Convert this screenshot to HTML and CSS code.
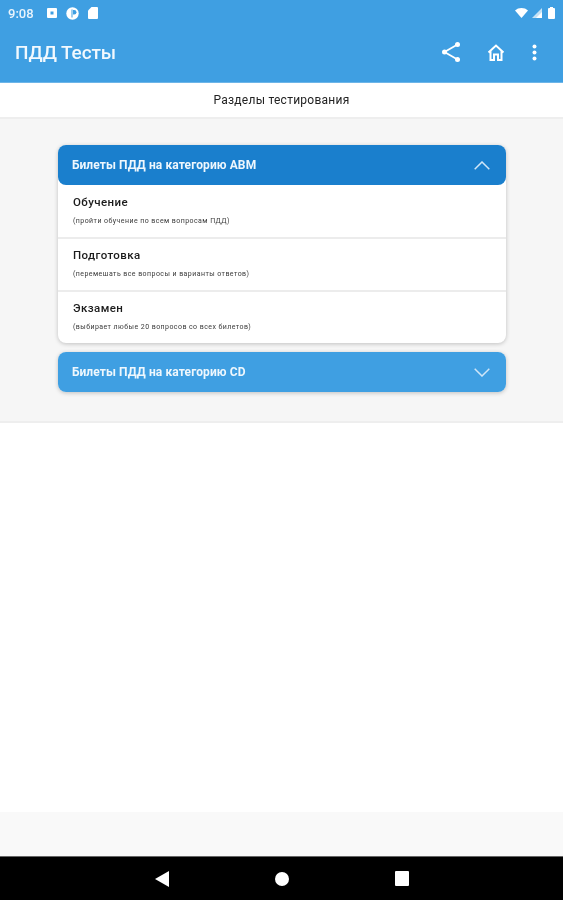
FILE: index.html
```html
<!DOCTYPE html>
<html lang="ru">
<head>
<meta charset="utf-8">
<title>ПДД Тесты</title>
<link rel="stylesheet" href="styles.css">
</head>
<body>
<div class="screen">
  <header class="appbar">
    <div class="status">
      <div class="status-left">
        <span class="clock">9:08</span>
        <svg class="st-icon" width="10" height="10" viewBox="0 0 10 10"><path fill="#fff" fill-rule="evenodd" d="M1 0h8a1 1 0 0 1 1 1v8a1 1 0 0 1-1 1H1a1 1 0 0 1-1-1V1a1 1 0 0 1 1-1zM3.500 3.500v3h3v-3z"/></svg>
        <svg class="st-icon st-p" width="13" height="13" viewBox="0 0 13 13"><circle cx="6.500" cy="6.500" r="6.200" fill="#fff"/><path fill="#3f9fe2" d="M5.500 2.500h1v8h-1z"/><path fill="#3f9fe2" d="M7 3h1.200a2 2 0 0 1 0 4.500H7z"/></svg>
        <svg class="st-icon st-sd" width="10" height="12" viewBox="0 0 10 12"><path fill="#fff" d="M3.500 0H9a1 1 0 0 1 1 1v10a1 1 0 0 1-1 1H1a1 1 0 0 1-1-1V3.500z"/></svg>
      </div>
      <div class="status-right">
        <svg class="st-wifi" width="13" height="10" viewBox="0 0 13 10"><path fill="#fff" d="M0 2.500C3.500-.8 9.500-.8 13 2.500L6.500 10z"/></svg>
        <svg class="st-signal" width="10" height="10" viewBox="0 0 10 10"><path fill="#fff" opacity=".7" d="M10 0v10H0z"/><path fill="#fff" d="M10 4v6H4z"/></svg>
        <svg width="7" height="12" viewBox="0 0 7 12"><path fill="#fff" d="M2 0h3v1h1a1 1 0 0 1 1 1v9a1 1 0 0 1-1 1H1a1 1 0 0 1-1-1V2a1 1 0 0 1 1-1h1z"/></svg>
      </div>
    </div>
    <div class="toolbar">
      <h1 class="app-title">ПДД Тесты</h1>
      <div class="actions">
        <svg class="share" width="20" height="22" viewBox="0 0 20 22"><path fill="none" stroke="#fff" stroke-width="1.800" d="M16.500 3.500 3.500 11l13 7.500"/><circle cx="16.500" cy="3.500" r="2.500" fill="#fff"/><circle cx="3.500" cy="11" r="2.500" fill="#fff"/><circle cx="16.500" cy="18.500" r="2.500" fill="#fff"/></svg>
        <svg class="home" width="18" height="17" viewBox="0 0 18 17"><path fill="none" stroke="#fff" stroke-width="2" d="M1.500 8.500 9 1.500l7.500 7M3.500 7v9h3.500v-5.500h4V16h3.500V7"/></svg>
        <svg class="more" width="5" height="17" viewBox="0 0 5 17"><circle cx="2.500" cy="2.500" r="2" fill="#fff"/><circle cx="2.500" cy="8.500" r="2" fill="#fff"/><circle cx="2.500" cy="14.500" r="2" fill="#fff"/></svg>
      </div>
    </div>
  </header>

  <div class="subtitle">Разделы тестирования</div>

  <main class="content">
    <section class="card">
      <div class="card-head active">
        <span>Билеты ПДД на категорию ABM</span>
        <svg width="16" height="9" viewBox="0 0 16 9"><path fill="none" stroke="#cfe6f8" stroke-width="1.500" d="M.7 8.200 8 1l7.300 7.200"/></svg>
      </div>
      <div class="item">
        <div class="item-title">Обучение</div>
        <div class="item-note">(пройти обучение по всем вопросам ПДД)</div>
      </div>
      <div class="item">
        <div class="item-title">Подготовка</div>
        <div class="item-note">(перемешать все вопросы и варианты ответов)</div>
      </div>
      <div class="item">
        <div class="item-title">Экзамен</div>
        <div class="item-note">(выбирает любые 20 вопросов со всех билетов)</div>
      </div>
    </section>
    <section class="card">
      <div class="card-head">
        <span>Билеты ПДД на категорию CD</span>
        <svg width="16" height="9" viewBox="0 0 16 9"><path fill="none" stroke="#cfe6f8" stroke-width="1.500" d="M.7.800 8 8l7.300-7.200"/></svg>
      </div>
    </section>
  </main>

  <div class="blank"></div>
  <div class="footer-strip"></div>

  <nav class="navbar">
    <svg width="14" height="16" viewBox="0 0 14 16"><path fill="#fff" d="M14 0v16L0 8z"/></svg>
    <span class="nav-dot"></span>
    <span class="nav-square"></span>
  </nav>
</div>
</body>
</html>
```

FILE: styles.css
```css
* { box-sizing: border-box; }
html, body { margin: 0; padding: 0; }
body { font-family: Roboto, "Noto Sans", sans-serif; background: #fff; }
.screen { width: 563px; height: 900px; display: flex; flex-direction: column; overflow: hidden; filter: blur(.4px); }

.appbar { height: 83px; background: #3f9fe2; color: #fff; flex: none; border-bottom: 1px solid #6db5e8; }
.status { height: 24px; display: flex; justify-content: space-between; align-items: center; padding: 2px 8px 0 8px; }
.status-left { display: flex; align-items: center; }
.clock { font-size: 13px; font-weight: 500; width: 39px; color: #e9f4fc; }
.st-icon { display: block; margin-right: 10px; }
.st-p { margin-right: 9px; margin-left: -1px; }
.status-right { display: flex; align-items: center; }
.st-wifi { margin-right: 4px; }
.st-signal { margin-right: 6px; }

.toolbar { height: 58px; display: flex; align-items: center; justify-content: space-between; padding: 0 26px 2px 15px; }
.app-title { margin: 0; font-size: 19px; font-weight: 500; letter-spacing: -.1px; color: #f2f9fe; }
.actions { display: flex; align-items: center; }
.share { display: block; margin-right: 26px; }
.home { display: block; margin-right: 27px; }
.more { display: block; }

.subtitle { height: 36px; flex: none; display: flex; align-items: center; justify-content: center; font-size: 12px; letter-spacing: .25px; color: #222; background: #fff; border-bottom: 2px solid #eeeeee; }

.content { height: 304px; flex: none; background: #f6f6f6; padding: 26px 57px 0 58px; display: flex; flex-direction: column; gap: 9px; border-bottom: 2px solid #eeeeee; }
.card { border-radius: 8px; background: #fff; box-shadow: 0 1px 4px rgba(0,0,0,.22); }
.card-head { height: 40px; background: #3f9fe2; border-radius: 8px; display: flex; align-items: center; justify-content: space-between; padding: 0 16px 0 14px; font-size: 12px; font-weight: 700; letter-spacing: .1px; color: #eef7fd; }
.card-head.active { background: #1a7fcd; }
.item { height: 53px; padding: 9px 15px 0; border-bottom: 2px solid #ececec; }
.card-head + .item { height: 54px; padding-top: 10px; }
.item:last-child { height: 51px; border-bottom: 0; }
.item-title { font-size: 11.500px; font-weight: 500; letter-spacing: .4px; line-height: 14px; color: #1c1c1c; }
.item-note { margin-top: 8px; font-size: 7px; line-height: 9px; letter-spacing: .44px; color: #3a3a3a; }

.blank { flex: 1; background: #fff; }
.footer-strip { height: 44px; flex: none; background: #f9f9f9; }

.navbar { height: 44px; flex: none; background: #000; border-top: 1px solid #666; display: flex; align-items: center; justify-content: space-between; padding: 0 154px 0 155px; }
.nav-dot { width: 14px; height: 14px; border-radius: 50%; background: #fff; display: block; }
.nav-square { width: 14px; height: 15px; border-radius: 1px; background: #fff; display: block; }
```
